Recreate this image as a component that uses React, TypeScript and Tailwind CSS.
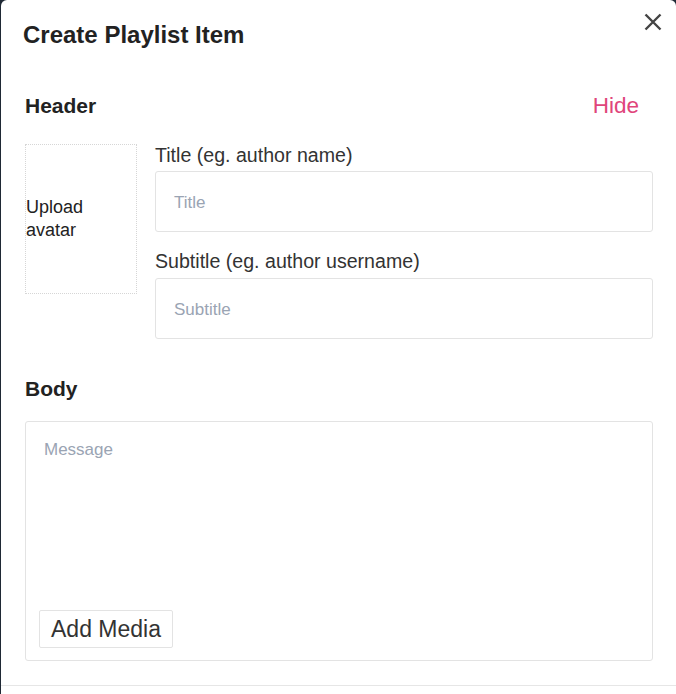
import React from "react";

export default function App() {
  return (
    <div className="w-[676px] h-[694px] bg-[#1f2935] flex overflow-hidden" style={{ fontFamily: '"Liberation Sans", Arial, sans-serif' }}>
      <div className="ml-[1px] flex-1 bg-white rounded-t-[6px] relative flex flex-col">
        <button className="absolute left-[643px] top-[13px] w-[18px] h-[18px]" aria-label="Close">
          <svg viewBox="0 0 18 18" width="18" height="18">
            <path d="M1.5 1.5 L16.5 16.5 M16.5 1.5 L1.5 16.5" stroke="#444" strokeWidth="2.4" strokeLinecap="butt" fill="none" />
          </svg>
        </button>

        <h1 className="mt-[21px] pl-[22px] text-[24px] leading-[28px] font-bold text-[#222]">Create Playlist Item</h1>

        <div className="mt-[43px] pl-[24px] pr-[37px] flex items-baseline justify-between leading-[28px]">
          <span className="text-[21px] font-bold text-[#222]">Header</span>
          <span className="text-[22.5px] text-[#e0457b]">Hide</span>
        </div>

        <div className="mt-[24px] pl-[24px] pr-[23px] flex items-start gap-[18px]">
          <div className="w-[112px] h-[150px] border border-dotted border-[#d6d6d6] flex items-center text-[18px] leading-[23px] text-[#222]">
            <span>Upload<br />avatar</span>
          </div>
          <div className="flex-1 flex flex-col">
            <label className="text-[19.6px] leading-[24px] text-[#333] -mt-[1px]">Title (eg. author name)</label>
            <div className="mt-[4px] h-[61px] border border-[#e3e3e3] rounded-[3px] flex items-center pl-[18px] pt-[2px] text-[17px] text-[#9aa4b3]">Title</div>
            <label className="mt-[17px] text-[19.6px] leading-[24px] text-[#333]">Subtitle (eg. author username)</label>
            <div className="mt-[5px] h-[61px] border border-[#e3e3e3] rounded-[3px] flex items-center pl-[18px] pt-[2px] text-[17px] text-[#9aa4b3]">Subtitle</div>
          </div>
        </div>

        <div className="mt-[36px] pl-[24px] text-[21px] leading-[28px] font-bold text-[#222]">Body</div>

        <div className="mt-[18px] ml-[24px] mr-[23px] h-[240px] border border-[#e3e3e3] rounded-[3px] flex flex-col px-[13px] pb-[12px]">
          <div className="pt-[18px] pl-[5px] text-[17px] leading-[20px] text-[#9aa4b3]">Message</div>
          <div className="flex-1" />
          <button className="self-start w-[134px] h-[38px] border border-[#e3e3e3] rounded-[2px] text-[23px] text-[#333] flex items-center justify-center">Add Media</button>
        </div>

        <div className="mt-[24px] border-t border-[#e6e6e6] flex-1" />
      </div>
    </div>
  );
}
